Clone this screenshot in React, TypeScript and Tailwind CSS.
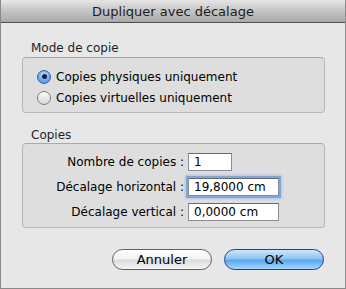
const FONT = "font-['DejaVu_Sans','Liberation_Sans',sans-serif]";

function Radio({ checked, label }: { checked: boolean; label: string }) {
  return (
    <div className="flex items-center h-[21px]">
      {checked ? (
        <span className="w-[14px] h-[14px] rounded-full border border-[#3b5f9a] bg-[radial-gradient(circle_at_50%_35%,#d5ecff_0%,#79b6f2_45%,#3d86de_100%)] flex items-center justify-center">
          <span className="w-[5px] h-[5px] rounded-full bg-[#17233a]" />
        </span>
      ) : (
        <span className="w-[14px] h-[14px] rounded-full border border-[#7d7d7d] bg-[linear-gradient(#fafafa,#d8d8d8)]" />
      )}
      <span className="ml-[5px] text-[12px] text-black leading-none">{label}</span>
    </div>
  );
}

function Field({ label, value, width, focused }: { label: string; value: string; width: string; focused?: boolean }) {
  return (
    <div className="flex items-center h-[25px]">
      <span className="w-[165px] text-right pr-[4px] text-[12px] text-black leading-none">{label}</span>
      <div
        className={
          "h-[18px] bg-white border border-[#8e8e8e] border-t-[#6a6a6a] flex items-center pl-[5px] text-[12px] text-black leading-none " +
          width +
          (focused ? " shadow-[0_0_0_2px_#7ea7dc,0_0_2px_3px_#a9c6ec]" : "")
        }
      >
        {value}
      </div>
    </div>
  );
}

export default function App() {
  return (
    <div className={"w-[346px] h-[289px] flex flex-col border-x border-b border-[#8a8a8a] bg-[#e7e7e7] " + FONT}>
      <div className="h-[23px] shrink-0 flex items-center justify-center bg-[linear-gradient(#e6e6e6,#c4c4c4_50%,#a9a9a9)] border-b border-[#4d4d4d] rounded-t-[4px]">
        <span className="text-[13px] text-[#1c1c1c] leading-none">Dupliquer avec décalage</span>
      </div>

      <div className="flex flex-col px-[21px]">
        <div className="mt-[18px] ml-[9px] text-[12px] text-[#1f1f1f] leading-[15px]">Mode de copie</div>
        <div className="mt-[1px] h-[56px] w-[303px] rounded-[4px] border border-[#b9b9b9] border-t-[#a9a9a9] bg-[#dedede] pt-[8px] pl-[14px] flex flex-col">
          <Radio checked label="Copies physiques uniquement" />
          <Radio checked={false} label="Copies virtuelles uniquement" />
        </div>

        <div className="mt-[15px] ml-[9px] text-[12px] text-[#1f1f1f] leading-[15px]">Copies</div>
        <div className="mt-[0px] h-[85px] w-[303px] rounded-[4px] border border-[#b9b9b9] border-t-[#a9a9a9] bg-[#dedede] pt-[5px] flex flex-col">
          <Field label="Nombre de copies :" value="1" width="w-[44px]" />
          <Field label="Décalage horizontal :" value="19,8000 cm" width="w-[91px]" focused />
          <Field label="Décalage vertical :" value="0,0000 cm" width="w-[91px]" />
        </div>

        <div className="mt-[21px] flex justify-end gap-[12px] pr-[0px]">
          <button className="w-[100px] h-[21px] rounded-full border border-[#5f5f5f] bg-[linear-gradient(#ffffff,#f2f2f2_45%,#dcdcdc_55%,#f5f5f5)] text-[13px] text-black leading-none">
            Annuler
          </button>
          <button className="w-[100px] h-[21px] rounded-full border border-[#2b3f7e] bg-[linear-gradient(#cde7fb,#8fc5f3_45%,#5aa7ee_55%,#a4d8fb)] text-[13px] text-black leading-none">
            OK
          </button>
        </div>
      </div>
    </div>
  );
}
